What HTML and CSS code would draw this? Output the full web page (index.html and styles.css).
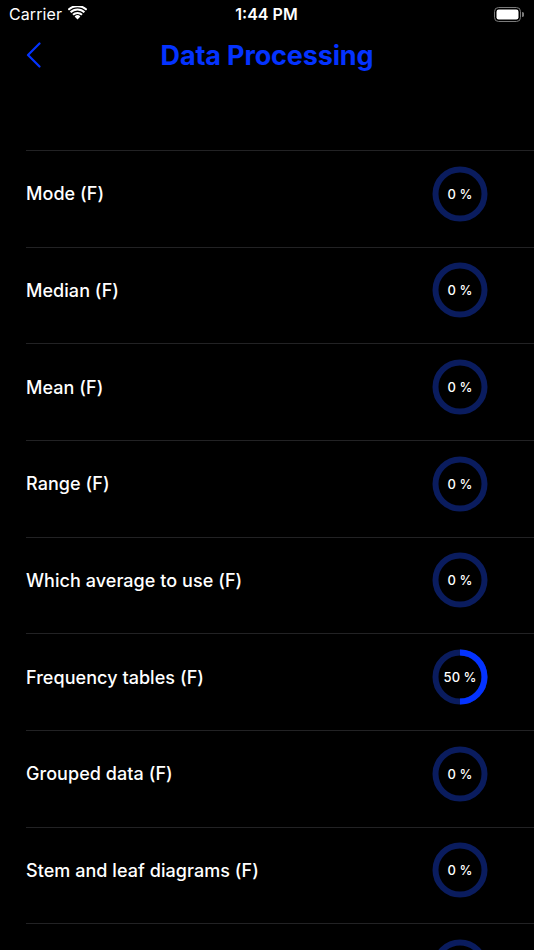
FILE: index.html
```html
<!DOCTYPE html>
<html>
<head>
<meta charset="utf-8">
<link rel="stylesheet" href="styles.css">
</head>
<body>
<div class="screen">
  <div class="status">
    <div class="status-left">
      <span class="carrier">Carrier</span>
      <svg class="wifi" width="19" height="14" viewBox="0 0 19 14">
        <path d="M9.5 13.5 L6.6 10.4 A4.2 4.2 0 0 1 12.4 10.4 Z" fill="#fff"/>
        <path d="M4.3 8.1 A7.4 7.4 0 0 1 14.7 8.1 L13.3 9.6 A5.4 5.4 0 0 0 5.7 9.6 Z" fill="#fff"/>
        <path d="M1.9 5.6 A10.8 10.8 0 0 1 17.1 5.6 L15.7 7.1 A8.8 8.8 0 0 0 3.3 7.1 Z" fill="#fff"/>
        <path d="M-0.4 3.1 A14.2 14.2 0 0 1 19.4 3.1 L18 4.6 A12.2 12.2 0 0 0 1 4.6 Z" fill="#fff"/>
      </svg>
    </div>
    <div class="time">1:44 PM</div>
    <div class="status-right">
      <svg width="30" height="15" viewBox="0 0 30 15">
        <rect x="0.5" y="0.5" width="26" height="14" rx="4" fill="none" stroke="#7a7a7a" stroke-width="1"/>
        <rect x="2.5" y="2.5" width="22" height="10" rx="2.2" fill="#fff"/>
        <path d="M28 5 A2 2.2 0 0 1 28 10 Z" fill="#7a7a7a"/>
      </svg>
    </div>
  </div>
  <div class="navbar">
    <svg class="back" width="16" height="26" viewBox="0 0 16 26">
      <path d="M13.5 1.5 L2 13 L13.5 24.5" fill="none" stroke="#0433ff" stroke-width="2.2" stroke-linecap="round" stroke-linejoin="round"/>
    </svg>
    <h1 class="title">Data Processing</h1>
  </div>
  <div class="list">
    <div class="row"><span class="label">Mode (F)</span><div class="ring"><svg width="56" height="56" viewBox="0 0 56 56"><circle cx="28" cy="28" r="24.5" class="track"/></svg><span class="pct">0 %</span></div></div>
    <div class="row"><span class="label">Median (F)</span><div class="ring"><svg width="56" height="56" viewBox="0 0 56 56"><circle cx="28" cy="28" r="24.5" class="track"/></svg><span class="pct">0 %</span></div></div>
    <div class="row"><span class="label">Mean (F)</span><div class="ring"><svg width="56" height="56" viewBox="0 0 56 56"><circle cx="28" cy="28" r="24.5" class="track"/></svg><span class="pct">0 %</span></div></div>
    <div class="row"><span class="label">Range (F)</span><div class="ring"><svg width="56" height="56" viewBox="0 0 56 56"><circle cx="28" cy="28" r="24.5" class="track"/></svg><span class="pct">0 %</span></div></div>
    <div class="row"><span class="label">Which average to use (F)</span><div class="ring"><svg width="56" height="56" viewBox="0 0 56 56"><circle cx="28" cy="28" r="24.5" class="track"/></svg><span class="pct">0 %</span></div></div>
    <div class="row"><span class="label">Frequency tables (F)</span><div class="ring"><svg width="56" height="56" viewBox="0 0 56 56"><circle cx="28" cy="28" r="24.5" class="track"/><path d="M28 3.5 A24.5 24.5 0 0 1 28 52.5" class="fill"/></svg><span class="pct">50 %</span></div></div>
    <div class="row"><span class="label">Grouped data (F)</span><div class="ring"><svg width="56" height="56" viewBox="0 0 56 56"><circle cx="28" cy="28" r="24.5" class="track"/></svg><span class="pct">0 %</span></div></div>
    <div class="row"><span class="label">Stem and leaf diagrams (F)</span><div class="ring"><svg width="56" height="56" viewBox="0 0 56 56"><circle cx="28" cy="28" r="24.5" class="track"/></svg><span class="pct">0 %</span></div></div>
    <div class="row"><span class="label"></span><div class="ring"><svg width="56" height="56" viewBox="0 0 56 56"><circle cx="28" cy="28" r="24.5" class="track"/></svg></div></div>
  </div>
</div>
</body>
</html>
```

FILE: styles.css
```css
html, body {
  margin: 0;
  padding: 0;
  background: #000;
  overflow: hidden;
}
body {
  font-family: Inter, "Noto Sans", "Liberation Sans", sans-serif;
  color: #fff;
}
.screen {
  width: 534px;
  height: 950px;
  overflow: hidden;
  background: #000;
}
.status {
  height: 28px;
  display: grid;
  grid-template-columns: 1fr auto 1fr;
  align-items: center;
  padding: 0 10px 0 9px;
}
.status-left {
  display: flex;
  align-items: center;
  gap: 6px;
}
.carrier {
  font-size: 16px;
  font-weight: 400;
  letter-spacing: 0.1px;
}
.wifi {
  margin-top: -2px;
}
.time {
  font-size: 16px;
  font-weight: 600;
}
.status-right {
  display: flex;
  justify-content: flex-end;
}
.navbar {
  height: 54px;
  display: flex;
  align-items: center;
  justify-content: center;
  position: relative;
}
.back {
  position: absolute;
  left: 26px;
  top: 14px;
}
.title {
  margin: 0;
  font-size: 27px;
  font-weight: 700;
  color: #0433ff;
  letter-spacing: -0.15px;
}
.list {
  margin-top: 68px;
  margin-left: 26px;
}
.row {
  height: 96.67px;
  box-sizing: border-box;
  border-top: 1px solid #222224;
  display: flex;
  align-items: center;
  justify-content: space-between;
  padding: 0 46px 10px 0;
}
.label {
  font-size: 18px;
  font-weight: 500;
  letter-spacing: 0.05px;
}
.ring {
  width: 56px;
  height: 56px;
  display: grid;
  place-items: center;
}
.ring > * {
  grid-area: 1 / 1;
}
.track {
  fill: none;
  stroke: #0a1c5e;
  stroke-width: 6;
}
.fill {
  fill: none;
  stroke: #0433ff;
  stroke-width: 6;
}
.pct {
  font-size: 13px;
  font-weight: 500;
}
```
